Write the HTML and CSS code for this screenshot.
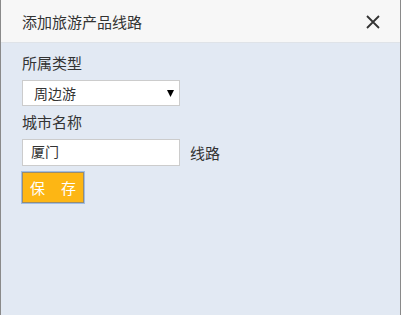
FILE: index.html
```html
<!DOCTYPE html>
<html lang="zh-CN">
<head>
    <meta charset="UTF-8">
    <title>添加旅游产品线路</title>
    <link rel="stylesheet" href="styles.css">
</head>
<body>
    <div class="dialog">
        <div class="dialog-header">
            <span class="dialog-title">添加旅游产品线路</span>
            <span class="dialog-close">
                <svg width="14" height="14" viewBox="0 0 14 14">
                    <path d="M1 1 L13 13 M13 1 L1 13" stroke="#333" stroke-width="1.8" fill="none"/>
                </svg>
            </span>
        </div>
        <div class="dialog-body">
            <div class="field-label">所属类型</div>
            <div class="select-box">
                <span>周边游</span>
                <svg class="select-arrow" width="7" height="7" viewBox="0 0 7 7">
                    <path d="M0 0 H7 L3.5 7 Z" fill="#000"/>
                </svg>
            </div>
            <div class="field-label">城市名称</div>
            <div class="input-row">
                <div class="text-input">厦门</div>
                <span class="input-suffix">线路</span>
            </div>
            <button class="save-btn">保 存</button>
        </div>
    </div>
</body>
</html>
```

FILE: styles.css
```css
/* General styles */
body {
    margin: 0;
    font-family: "Liberation Sans", "Noto Sans CJK SC", sans-serif;
    color: #333;
}

.dialog {
    width: 399px;
    height: 315px;
    border-left: 1px solid #8a8a8a;
    border-right: 1px solid #8a8a8a;
    background-color: #e2e9f3;
}

.dialog-header {
    height: 42px;
    background-color: #f7f7f7;
    border-bottom: 1px solid #dfe3e8;
    display: flex;
    align-items: center;
    justify-content: space-between;
    padding: 0 20px 0 21px;
}

.dialog-title {
    font-size: 15px;
}

.dialog-close {
    display: flex;
    margin-top: 2px;
}

.dialog-body {
    padding: 11px 21px;
}

.field-label {
    font-size: 15px;
    line-height: 20px;
    margin-bottom: 6px;
}

.select-box {
    width: 145px;
    height: 24px;
    border: 1px solid #ccc;
    background-color: #fff;
    display: flex;
    align-items: center;
    justify-content: space-between;
    padding-left: 11px;
    font-size: 14px;
    margin-bottom: 7px;
}

.select-arrow {
    margin-right: 5px;
}

.input-row {
    display: flex;
    align-items: center;
    gap: 10px;
    margin-bottom: 6px;
}

.text-input {
    width: 148px;
    height: 25px;
    line-height: 25px;
    border: 1px solid #ccc;
    background-color: #fff;
    padding-left: 8px;
    font-size: 14px;
}

.input-suffix {
    font-size: 15px;
}

.save-btn {
    width: 62px;
    height: 31px;
    background-color: #fdb614;
    border: 1px solid #9a8c6c;
    box-shadow: 0 0 0 1px #9dbde8;
    color: #fff;
    font-family: inherit;
    font-size: 15px;
    letter-spacing: 6px;
    padding: 0 0 0 6px;
    cursor: pointer;
}
```
